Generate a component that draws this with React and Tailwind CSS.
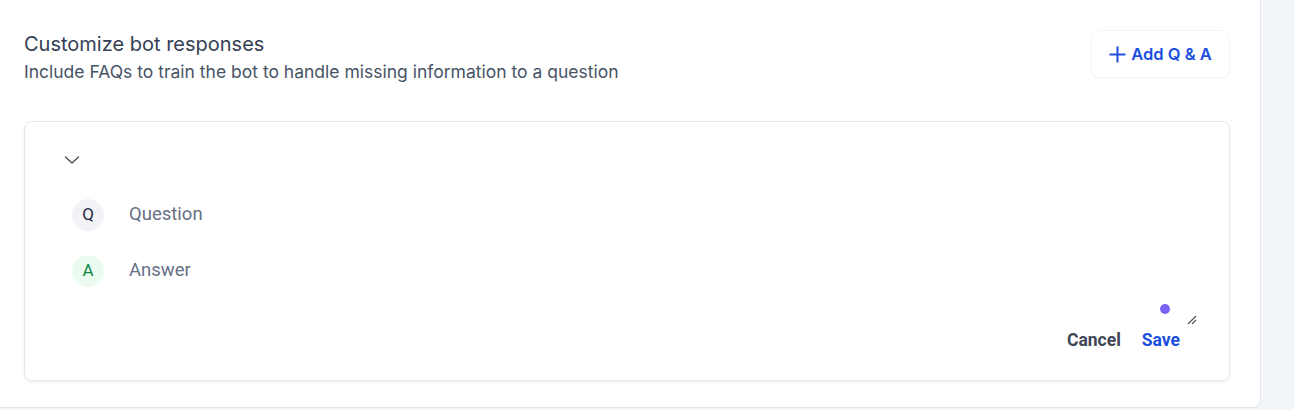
import React from "react";

export default function App() {
  return (
    <div className="w-[1294px] h-[410px] bg-[#f3f6f9] flex overflow-hidden" style={{ fontFamily: "Inter, 'Liberation Sans', sans-serif" }}>
      <div className="w-[1261px] h-[408px] bg-white border-r border-b border-[#e3e6ea] rounded-br-lg pl-6 pr-[30px] pt-[30px] flex flex-col">
        <div className="flex justify-between items-start">
          <div className="pt-[2px]">
            <div className="text-[20px] leading-[24px] text-[#344054]">Customize bot responses</div>
            <div className="text-[17.5px] leading-[24px] mt-[4px] text-[#475467]">Include FAQs to train the bot to handle missing information to a question</div>
          </div>
          <button className="h-[48px] w-[139px] rounded-lg border border-[#f4f5f6] shadow-[0_1px_2px_rgba(16,24,40,0.03)] flex items-center justify-center gap-[5px] text-[#1a4fe0] text-[16.5px] font-semibold">
            <svg width="17" height="17" viewBox="0 0 17 17" fill="none" stroke="currentColor" strokeWidth="2" strokeLinecap="square"><path d="M8.5 1.5v14M1.5 8.5h14" /></svg>
            Add Q &amp; A
          </button>
        </div>
        <div className="mt-[37px] h-[260px] rounded-lg border border-[#e5e7eb] shadow-[0_1px_3px_rgba(16,24,40,0.08)] flex flex-col pl-[39px] pr-[49px]" style={{ fontFamily: "Roboto, 'Liberation Sans', sans-serif" }}>
          <div className="pt-[33px] h-[56px]">
            <svg width="16" height="10" viewBox="0 0 16 10" fill="none" stroke="#4b5563" strokeWidth="1.5" strokeLinecap="round" strokeLinejoin="round"><path d="M1.5 2l6.5 6 6.5-6" /></svg>
          </div>
          <div className="flex items-center h-[40px] mt-[17px] pl-[8px] gap-[25px]">
            <div className="w-[32px] h-[32px] rounded-full bg-[#f2f3f7] flex items-center justify-center text-[17px] text-[#1f2a44]">Q</div>
            <div className="text-[18.5px] text-[#667085]">Question</div>
          </div>
          <div className="flex items-center h-[40px] mt-[16px] pl-[8px] gap-[25px]">
            <div className="w-[32px] h-[32px] rounded-full bg-[#ebfbf0] flex items-center justify-center text-[17px] text-[#11874a]">A</div>
            <div className="text-[18.5px] text-[#667085]">Answer</div>
          </div>
          <div className="flex justify-end items-end relative mt-[17px]">
            <div className="absolute right-[10px] top-[-4px] w-[10px] h-[10px] rounded-full bg-[#7b61f5]" />
            <svg className="absolute right-[-17px] top-[7px]" width="10" height="10" viewBox="0 0 10 10" fill="none" stroke="#555" strokeWidth="1.2"><path d="M1 9L9 1M5 9L9 5" /></svg>
            <div className="flex items-center gap-[21px] mt-[20px] text-[17.5px] leading-[24px] font-bold">
              <span className="text-[#3f4655]">Cancel</span>
              <span className="text-[#1a4fe0]">Save</span>
            </div>
          </div>
        </div>
      </div>
    </div>
  );
}
